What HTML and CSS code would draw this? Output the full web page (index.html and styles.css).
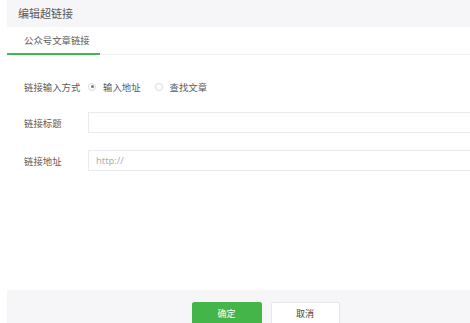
FILE: index.html
```html
<!DOCTYPE html>
<html lang="zh">
<head>
<meta charset="utf-8">
<link rel="stylesheet" href="styles.css">
</head>
<body>
<div class="dialog">
  <div class="header">编辑超链接</div>
  <div class="tabs">
    <div class="tab active">公众号文章链接</div>
  </div>
  <div class="form">
    <div class="row row-radio">
      <div class="label">链接输入方式</div>
      <label class="radio checked"><span class="dot"></span>输入地址</label>
      <label class="radio"><span class="dot"></span>查找文章</label>
    </div>
    <div class="row row-title">
      <div class="label">链接标题</div>
      <div class="input"></div>
    </div>
    <div class="row row-url">
      <div class="label">链接地址</div>
      <div class="input"><span class="placeholder">http://</span></div>
    </div>
  </div>
  <div class="footer">
    <button class="btn primary">确定</button>
    <button class="btn">取消</button>
  </div>
</div>
</body>
</html>
```
FILE: styles.css
```css
html, body {
  margin: 0;
  padding: 0;
  background: #ffffff;
  overflow: hidden;
}
body {
  font-family: "Noto Sans CJK SC", "Noto Sans", sans-serif;
  color: #444;
}
.dialog {
  width: 470px;
  height: 323px;
  padding-left: 7px;
  box-sizing: border-box;
  display: flex;
  flex-direction: column;
}
.header {
  height: 27px;
  background: #f6f6f9;
  font-size: 11px;
  line-height: 27px;
  padding-left: 11px;
  color: #5a5a5a;
}
.tabs {
  height: 28px;
  box-sizing: border-box;
  border-bottom: 1px solid #eeeef0;
  display: flex;
}
.tab {
  width: 93px;
  box-sizing: border-box;
  padding-left: 17px;
  font-size: 9.4px;
  line-height: 27px;
  color: #5a5a5a;
}
.tab.active {
  border-bottom: 2px solid #44b549;
  height: 28px;
}
.form {
  flex: 1;
  padding-left: 17px;
  padding-top: 21px;
}
.row {
  display: flex;
  align-items: center;
  height: 21px;
}
.label {
  width: 64px;
  font-size: 9.4px;
  color: #5a5a5a;
}
.row-title { margin-top: 15px; }
.row-url { margin-top: 17px; }
.radio {
  display: flex;
  align-items: center;
  font-size: 9.4px;
  color: #5a5a5a;
  margin-right: 14px;
}
.radio .dot {
  width: 8px;
  height: 8px;
  border: 1px solid #dadada;
  border-radius: 50%;
  box-sizing: border-box;
  margin-right: 7px;
  margin-left: 0;
  display: inline-flex;
  align-items: center;
  justify-content: center;
}
.radio.checked .dot::after {
  content: "";
  width: 3px;
  height: 3px;
  border-radius: 50%;
  background: #777;
}
.input {
  flex: 1;
  height: 21px;
  box-sizing: border-box;
  border: 1px solid #ebebed;
  border-right: none;
  display: flex;
  align-items: center;
  padding-left: 7px;
}
.placeholder {
  font-family: "Noto Sans", sans-serif;
  font-size: 9.4px;
  color: #b0b0b0;
}
.footer {
  height: 33px;
  background: #f6f6f9;
  display: flex;
  justify-content: center;
  align-items: flex-start;
  padding-top: 12px;
  box-sizing: border-box;
  gap: 9px;
  padding-left: 54px;
}
.btn {
  width: 69px;
  height: 23px;
  border: 1px solid #e6e6e8;
  background: #ffffff;
  color: #444;
  font-family: "Noto Sans CJK SC", sans-serif;
  font-size: 9px;
  padding: 0;
  border-radius: 2px;
}
.btn.primary {
  width: 70px;
  background: #44b549;
  border-color: #44b549;
  color: #ffffff;
}
```
